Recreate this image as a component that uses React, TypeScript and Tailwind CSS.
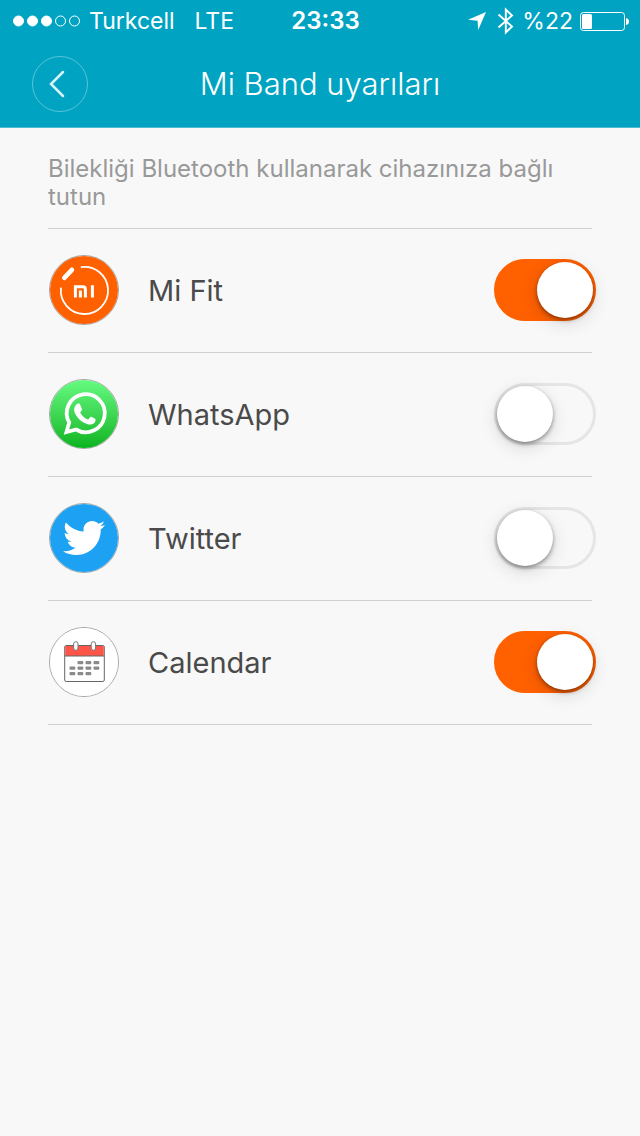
import { useState } from "react";
import type { ReactNode } from "react";
import { FaTwitter } from "react-icons/fa";

type AlertApp = {
  id: string;
  name: string;
  enabled: boolean;
  icon: ReactNode;
};

const apps: AlertApp[] = [
  { id: "mifit", name: "Mi Fit", enabled: true, icon: <MiFitIcon /> },
  { id: "whatsapp", name: "WhatsApp", enabled: false, icon: <WhatsAppIcon /> },
  { id: "twitter", name: "Twitter", enabled: false, icon: <TwitterIcon /> },
  { id: "calendar", name: "Calendar", enabled: true, icon: <CalendarIcon /> },
];

function MiFitIcon() {
  return (
    <div className="size-full bg-[#ff6000]">
      <svg viewBox="1 1 68 68" className="size-full" fill="none">
        <path d="M31.8 12.1A23.6 23.6 0 1 1 12 32.6" stroke="#fff" strokeWidth="1.8" />
        <path d="M15.3 22.8l7.6-8" stroke="#fff" strokeWidth="4.6" strokeLinecap="round" />
        {/* mi logo */}
        <path d="M26.4 42.6V31.8h7.4q2.6 0 2.6 2.6v8.2" stroke="#fff" strokeWidth="3" />
        <path d="M31.4 35.4v7.2M43.4 30.3v12.3" stroke="#fff" strokeWidth="3" />
      </svg>
    </div>
  );
}

function WhatsAppIcon() {
  return (
    <div className="size-full bg-linear-to-b from-[#64fb80] to-[#04b41c]">
      <svg viewBox="1 1 68 68" className="size-full" fill="none">
        <path
          d="M17.500 53l2.700-9.500A19 19 0 1 1 27 50.500z"
          stroke="#fff"
          strokeWidth="3.800"
        />
        <path
          d="M28.600 24.600c1.500-.3 2.100.1 2.600 1.200l1.700 4.100c.3.800 0 1.500-1.800 3.500 1.900 3.400 4.400 5.700 8 7.200 1-1 1.700-2.300 2.400-2.700.6-.3 4.300 1.700 4.900 2.200.6.700-.2 3.500-1.600 4.400-2.400 1.600-5 1.400-9.700-.8-4.200-2.100-7.200-5.600-9-9.200-1.600-3.300-1.300-7.200 2.500-9.900z"
          fill="#fff"
        />
      </svg>
    </div>
  );
}

function TwitterIcon() {
  return (
    <div className="flex size-full items-center justify-center bg-[#1da1f2]">
      <FaTwitter className="size-[42px] text-white" />
    </div>
  );
}

function CalendarIcon() {
  const cells = [
    [31, 35], [39, 35], [47, 35],
    [23, 40.5], [31, 40.5], [39, 40.5], [47, 40.5],
    [23, 46], [31, 46], [39, 46],
  ];
  return (
    <div className="size-full bg-white">
      <svg viewBox="1 1 68 68" className="size-full">
        <rect x="15.7" y="18.5" width="39.6" height="36" rx="1.5" fill="#fff" stroke="#666" />
        <path d="M16.2 29V20q0-1 1-1h36.6q1 0 1 1v9z" fill="#ff5548" />
        <path d="M15.7 29h39.6" stroke="#666" />
        {cells.map(([x, y]) => (
          <rect key={`${x}-${y}`} x={x - 2.5} y={y - 1} width="5.8" height="3.2" rx="1" fill="#8a8a8a" />
        ))}
        <rect x="24.6" y="14.7" width="4.4" height="8.6" rx="2.2" fill="#fff" stroke="#777" />
        <rect x="42.2" y="14.7" width="4.4" height="8.6" rx="2.2" fill="#fff" stroke="#777" />
      </svg>
    </div>
  );
}

function StatusBar() {
  return (
    <div className="grid h-10 grid-cols-[1fr_auto_1fr] items-center pt-0.5 pr-[11px] pl-3 text-[23px] leading-7">
      <div className="flex items-center gap-2">
        <svg width="69" height="12" viewBox="0 0 69 12" fill="none" stroke="#fff">
          {[0, 1, 2, 3, 4].map((i) => (
            <circle key={i} cx={6.5 + i * 14} cy="6" r="5" fill={i < 3 ? "#fff" : "none"} />
          ))}
        </svg>
        <span>Turkcell</span>
        <span className="ml-3">LTE</span>
      </div>
      <span className="pl-2.5 text-2xl leading-7 font-semibold">23:33</span>
      <div className="flex items-center justify-end gap-[7px]">
        <svg width="18" height="19" viewBox="0 0 18 19" fill="#fff">
          <path d="M18 0L10.200 18 9.600 8.800 0 7.800z" />
        </svg>
        <svg className="ml-1" width="18" height="28" viewBox="0 0 18 28" fill="none" stroke="#fff" strokeWidth="1.900">
          <path d="M1.500 7.500L15 19.500 8.800 25.500V2.500L15 8.500 1.500 20.500" />
        </svg>
        <span>%22</span>
        <svg width="49" height="19" viewBox="0 0 49 19" fill="none">
          <rect x="0.500" y="0.500" width="44" height="18" rx="3" stroke="#fff" />
          <rect x="2" y="2" width="10" height="15" rx="1.500" fill="#fff" />
          <path d="M46 6q3 0.500 3 3.500t-3 3.500z" fill="#fff" />
        </svg>
      </div>
    </div>
  );
}

function AlertRow({ app }: { app: AlertApp }) {
  const [enabled, setEnabled] = useState(app.enabled);

  return (
    <li className="flex h-31 items-center border-b border-[#cfcfcf] pb-0.5">
      <div className="ml-px size-[70px] shrink-0 overflow-hidden rounded-full border border-[#a5a5a5]">
        {app.icon}
      </div>
      <label htmlFor={app.id} className="ml-[29px] flex-1 pt-0.5 text-[29px] leading-9 text-[#4a4a4a]">
        {app.name}
      </label>
      <input
        id={app.id}
        type="checkbox"
        role="switch"
        checked={enabled}
        onChange={(e) => setEnabled(e.target.checked)}
        className="-mr-1 flex h-[62px] w-[102px] shrink-0 cursor-pointer appearance-none items-center rounded-full border-3 border-[#e5e5e5] before:size-14 before:rounded-full before:bg-white before:shadow-[0_2px_4px_rgba(0,0,0,0.4),0_5px_18px_rgba(0,0,0,0.14)] checked:justify-end checked:border-[#ff6000] checked:bg-[#ff6000]"
      />
    </li>
  );
}

export default function App() {
  return (
    <div className="min-h-screen bg-[#f8f8f8] font-['Inter',sans-serif]">
      <header className="border-b border-[#4dbdd4] bg-[#00a4c2] text-white">
        <StatusBar />
        <div className="grid h-[87px] grid-cols-[56px_1fr_56px] items-center px-8">
          <button
            type="button"
            aria-label="Geri"
            className="flex size-14 items-center justify-center rounded-full border border-white/35"
          >
            <svg className="mr-1.5" width="16" height="28" viewBox="0 0 16 28" fill="none">
              <path d="M14 2L2 14l12 12" stroke="#d6f3f8" strokeWidth="2.500" strokeLinecap="round" />
            </svg>
          </button>
          <h1 className="text-center text-[31px] leading-10 font-light">Mi Band uyarıları</h1>
        </div>
      </header>
      <main className="px-12 pt-[27px]">
        <p className="pb-[17px] text-2xl leading-7 text-[#999]">
          Bilekliği Bluetooth kullanarak cihazınıza bağlı tutun
        </p>
        <ul className="border-t border-[#cfcfcf]">
          {apps.map((app) => (
            <AlertRow key={app.id} app={app} />
          ))}
        </ul>
      </main>
    </div>
  );
}
